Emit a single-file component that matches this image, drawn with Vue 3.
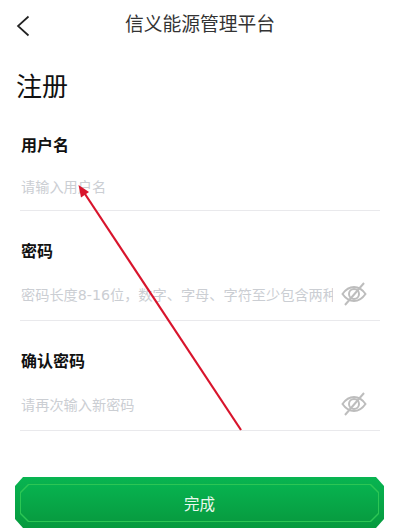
<template>
  <div class="page">
    <header class="nav">
      <button class="back" aria-label="back">
        <svg width="14" height="22" viewBox="0 0 14 22">
          <path d="M12.5 1.5 2 11l10.5 9.5" fill="none" stroke="#222" stroke-width="1.7" />
        </svg>
      </button>
      <span class="nav-title">信义能源管理平台</span>
    </header>

    <h1 class="heading">注册</h1>

    <div v-for="field in fields" :key="field.label" class="field">
      <div class="label">{{ field.label }}</div>
      <div class="input-row">
        <span class="placeholder">{{ field.placeholder }}</span>
        <svg v-if="field.secret" class="eye" width="26" height="24" viewBox="0 0 26 24">
          <path d="M1.5 12C5 7 9 5 13 5s8 2 11.500 7C21 17 17 19 13 19S5 17 1.500 12Z" fill="none" stroke="#bdbdbd" stroke-width="2" />
          <circle cx="13" cy="12" r="5" fill="none" stroke="#bdbdbd" stroke-width="2" />
          <path d="M23 1 4 23" fill="none" stroke="#bdbdbd" stroke-width="2" />
        </svg>
      </div>
    </div>

    <div class="btn">
      <div class="btn-line">
        <div class="btn-fill">完成</div>
      </div>
    </div>

    <svg class="arrow" width="400" height="530" viewBox="0 0 400 530">
      <path d="M241 430 85 194" fill="none" stroke="#d8142c" stroke-width="2.200" />
      <path d="M78.500 185 89 192 81 197.500Z" fill="#d8142c" />
    </svg>
  </div>
</template>

<script setup>
const fields = [
  { label: '用户名', placeholder: '请输入用户名', secret: false },
  { label: '密码', placeholder: '密码长度8-16位，数字、字母、字符至少包含两种', secret: true },
  { label: '确认密码', placeholder: '请再次输入新密码', secret: true }
];
</script>

<style>
html,
body {
  margin: 0;
  background: #fff;
}
</style>

<style scoped>
.page {
  position: relative;
  width: 400px;
  height: 530px;
  overflow: hidden;
  background: #fff;
  font-family: "Noto Sans CJK SC", "Noto Sans", sans-serif;
  color: #111;
}

.nav {
  height: 50px;
  display: flex;
  align-items: center;
  justify-content: center;
  position: relative;
}

.back {
  position: absolute;
  left: 16px;
  top: 15px;
  padding: 0;
  border: none;
  background: none;
  line-height: 0;
}

.nav-title {
  font-size: 18.800px;
  line-height: 44px;
  margin-bottom: 4px;
  color: #333;
}

.heading {
  margin: 16px 0 22px 16px;
  font-size: 26px;
  line-height: 38px;
  font-weight: 400;
}

.field {
  margin: 0 20px;
  height: 109px;
  box-sizing: content-box;
  border-bottom: 1px solid #e9e9ec;
  display: flex;
  flex-direction: column;
}

.field:first-of-type {
  height: 84px;
}

.label {
  padding-left: 1px;
  font-size: 16px;
  line-height: 24px;
  font-weight: 700;
  margin-top: auto;
}

.input-row {
  display: flex;
  align-items: center;
  justify-content: space-between;
  height: 24px;
  margin: 20px 0 14px;
}

.field:first-of-type .input-row {
  margin: 18px 0 12px;
}

.field:last-of-type .input-row {
  margin: 20px 0 16px;
}

.placeholder {
  width: 312px;
  padding-left: 1px;
  font-family: "DejaVu Sans", "Noto Sans CJK SC", sans-serif;
  font-size: 14.200px;
  white-space: nowrap;
  overflow: hidden;
  color: #cbced3;
}

.eye {
  margin-right: 13px;
}

.btn {
  margin: 46px 16px 0 15px;
  height: 51px;
  padding: 7px 5px 6px;
  box-sizing: border-box;
  background: linear-gradient(#08b451, #069a3e);
  clip-path: polygon(8px 0, calc(100% - 8px) 0, 100% 9px, 100% calc(100% - 9px), calc(100% - 8px) 100%, 8px 100%, 0 calc(100% - 9px), 0 9px);
}

.btn-line {
  height: 100%;
  padding: 1px;
  box-sizing: border-box;
  background: #2cc654;
  clip-path: polygon(8px 0, calc(100% - 8px) 0, 100% 8px, 100% calc(100% - 8px), calc(100% - 8px) 100%, 8px 100%, 0 calc(100% - 8px), 0 8px);
}

.btn-fill {
  height: 100%;
  display: flex;
  align-items: center;
  justify-content: center;
  font-size: 15.500px;
  color: #eaf8ee;
  background: linear-gradient(#07b24f, #079c40);
  clip-path: polygon(8px 0, calc(100% - 8px) 0, 100% 8px, 100% calc(100% - 8px), calc(100% - 8px) 100%, 8px 100%, 0 calc(100% - 8px), 0 8px);
}

.arrow {
  position: absolute;
  left: 0;
  top: 0;
  pointer-events: none;
}
</style>
